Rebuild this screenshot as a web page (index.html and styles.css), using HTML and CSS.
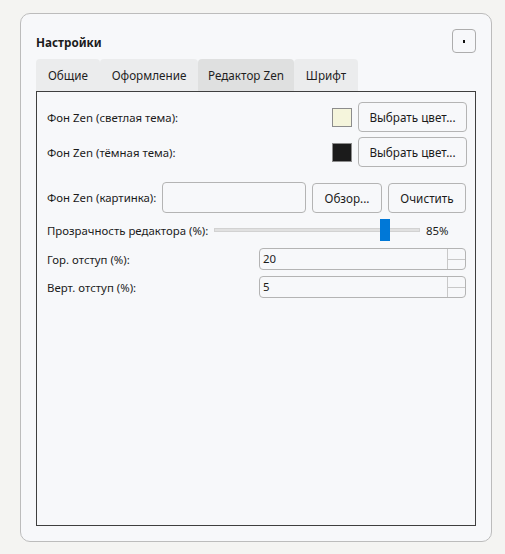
FILE: index.html
```
<!DOCTYPE html>
<html lang="ru">
<head>
<meta charset="utf-8">
<link rel="stylesheet" href="styles.css">
</head>
<body>
<div class="card">
  <div class="header">
    <div class="title">Настройки</div>
    <button class="help"><span class="dot"></span></button>
  </div>
  <div class="tabs">
    <div class="tab t1">Общие</div>
    <div class="tab t2">Оформление</div>
    <div class="tab t3 active">Редактор Zen</div>
    <div class="tab t4">Шрифт</div>
  </div>
  <div class="panel">
    <div class="row r1">
      <span class="label">Фон Zen (светлая тема):</span>
      <span class="spacer"></span>
      <span class="swatch light"></span>
      <button class="btn color">Выбрать цвет...</button>
    </div>
    <div class="row r2">
      <span class="label">Фон Zen (тёмная тема):</span>
      <span class="spacer"></span>
      <span class="swatch dark"></span>
      <button class="btn color">Выбрать цвет...</button>
    </div>
    <div class="row r3">
      <span class="label l3">Фон Zen (картинка):</span>
      <span class="input"></span>
      <button class="btn browse">Обзор...</button>
      <button class="btn clear">Очистить</button>
    </div>
    <div class="row r4">
      <span class="label l4">Прозрачность редактора (%):</span>
      <span class="slider"><span class="groove"></span><span class="handle"></span></span>
      <span class="pct">85%</span>
    </div>
    <div class="row r5">
      <span class="label lw">Гор. отступ (%):</span>
      <span class="spin"><span class="val">20</span><span class="arrows"><span></span><span></span></span></span>
    </div>
    <div class="row r6">
      <span class="label lw">Верт. отступ (%):</span>
      <span class="spin"><span class="val">5</span><span class="arrows"><span></span><span></span></span></span>
    </div>
  </div>
</div>
</body>
</html>
```
FILE: styles.css
```
html, body {
  margin: 0;
  padding: 0;
  background: #f4f4f2;
  font-family: "Noto Sans", "Open Sans", sans-serif;
  font-size: 11.4px;
  color: #1b1b1b;
}
body {
  padding: 13px 14px 0 20px;
}
.card {
  box-sizing: border-box;
  width: 472px;
  height: 529px;
  border: 1px solid #bcbcbc;
  border-radius: 10px;
  background: #f7f8fa;
  padding: 15px 15px 15px 15px;
}
.header {
  display: flex;
  justify-content: space-between;
  align-items: flex-start;
  height: 30px;
}
.title {
  font-weight: bold;
  font-size: 11.7px;
  margin-top: 5px;
  line-height: 16px;
}
.help {
  box-sizing: border-box;
  width: 24px;
  height: 24px;
  border: 1px solid #adadad;
  border-radius: 4px;
  background: #f7f8fa;
  padding: 0;
  display: flex;
  align-items: center;
  justify-content: center;
}
.dot {
  width: 2px;
  height: 3px;
  background: #111;
}
.tabs {
  display: flex;
  height: 32px;
}
.tab {
  box-sizing: border-box;
  height: 32px;
  line-height: 32px;
  text-align: center;
  background: #ebeced;
  border-radius: 4px 4px 0 0;
  color: #1e1e1e;
  font-size: 11.7px;
}
.t1 { width: 64px; }
.t2 { width: 98px; }
.t3 { width: 96px; }
.t4 { width: 64px; }
.tab.active { background: #dfe0e0; }
.panel {
  box-sizing: border-box;
  height: 435px;
  border: 1px solid #3f3f3f;
  padding: 10px 8px 0 10px;
  display: flex;
  flex-direction: column;
}
.row {
  display: flex;
  align-items: center;
}
.label {
  white-space: nowrap;
  flex-shrink: 0;
}
.l3 { width: 109px; }
.l4 { width: 161px; }
.spacer { flex: 1; }
.r1 { height: 30px; }
.r2 { height: 30px; margin-top: 5px; }
.r3 { height: 31px; margin-top: 15px; }
.r4 { height: 22px; margin-top: 6px; }
.r5 { height: 22px; margin-top: 7px; }
.r6 { height: 22px; margin-top: 6px; }
.swatch {
  box-sizing: border-box;
  width: 20px;
  height: 19px;
  border: 1px solid #8c8c8c;
  margin-right: 6px;
}
.swatch.light { background: #f5f5dc; }
.swatch.dark { background: #1b1b1b; }
.btn {
  box-sizing: border-box;
  font-family: inherit;
  font-size: 11.7px;
  color: #1b1b1b;
  background: #f7f8fa;
  border: 1px solid #b4b4b4;
  border-radius: 4px;
  height: 30px;
  padding: 0;
  flex-shrink: 0;
}
.color { width: 109px; }
.input {
  box-sizing: border-box;
  width: 144px;
  height: 31px;
  border: 1px solid #b4b4b4;
  border-radius: 4px;
  background: #f7f8fa;
  margin-left: 6px;
  flex-shrink: 0;
}
.browse { width: 70px; margin-left: 6px; height: 30px; }
.clear { width: 78px; margin-left: 6px; height: 30px; }
.slider {
  position: relative;
  width: 206px;
  height: 22px;
  margin-left: 6px;
  flex-shrink: 0;
}
.groove {
  position: absolute;
  left: 0;
  right: 0;
  top: 9px;
  background: #e1e1e1;
  border: 1px solid #d2d2d2;
  box-sizing: border-box;
  height: 4px;
}
.handle {
  position: absolute;
  left: 166px;
  top: 0;
  width: 10px;
  height: 22px;
  background: #0078d7;
}
.pct {
  margin-left: 6px;
}
.lw { width: 212px; }
.spin {
  box-sizing: border-box;
  width: 207px;
  height: 22px;
  border: 1px solid #b4b4b4;
  border-radius: 4px;
  display: flex;
  background: #f7f8fa;
}
.val {
  flex: 1;
  padding-left: 3px;
  line-height: 20px;
}
.arrows {
  width: 17px;
  border-left: 1px solid #c8c8c8;
  display: flex;
  flex-direction: column;
}
.arrows span { flex: 1; }
.arrows span:first-child { border-bottom: 1px solid #c8c8c8; }
```
